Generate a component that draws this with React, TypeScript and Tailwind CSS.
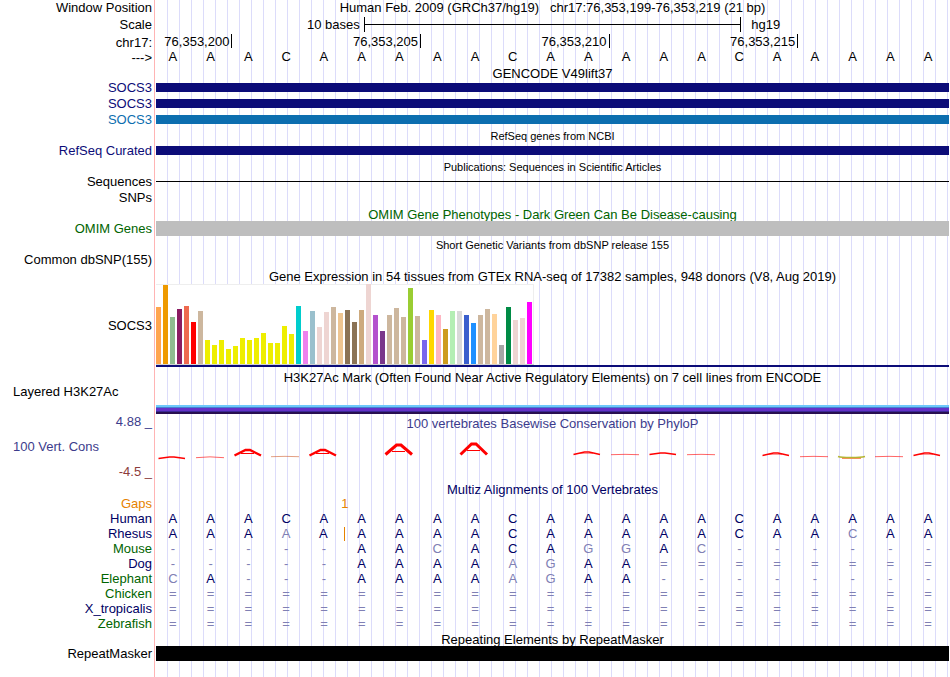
import type { ReactNode } from "react";
import { clsx } from "clsx";

interface IRow {
  label?: ReactNode;
  labelClass?: string;
  className: string;
  children?: ReactNode;
}

interface ITissue {
  height: number;
  color: string;
}

interface IPeak {
  top: number;
  height: number;
  color?: string;
  faint?: boolean;
  dip?: boolean;
}

const NAVY = "text-[#0c0c78]";
const GREEN = "text-[#006400]";

const REFERENCE = "AAACAAAAACAAAAACAAAAA";

const COORDINATES = ["76,353,200", "76,353,205", "76,353,210", "76,353,215"];

const GENES = [
  { text: "text-[#0c0c78]", bar: "bg-[#0c0c78]" },
  { text: "text-[#0c0c78]", bar: "bg-[#0c0c78]" },
  { text: "text-[#0c6eaf]", bar: "bg-[#0c6eaf]" },
];

const SPECIES = [
  { name: "Human", color: "text-[#000064]", bases: "AAACAAAAACAAAAACAAAAA" },
  { name: "Rhesus", color: "text-[#000064]", bases: "AAAAAAAAACAAAAACAACAA", gapAfter: 4 },
  { name: "Mouse", color: GREEN, bases: "-----AACACAGGAC------" },
  { name: "Dog", color: "text-[#000064]", bases: "-----AAAAAGAA========" },
  { name: "Elephant", color: GREEN, bases: "CA---AAAAAGAA--------" },
  { name: "Chicken", color: GREEN, bases: "=====================" },
  { name: "X_tropicalis", color: "text-[#000064]", bases: "=====================" },
  { name: "Zebrafish", color: GREEN, bases: "=====================" },
];

const TISSUES: ITissue[] = [
  { height: 57, color: "#ffa54f" },
  { height: 79, color: "#ee9a00" },
  { height: 47, color: "#8fbc8f" },
  { height: 55, color: "#8b1c62" },
  { height: 58, color: "#ee6a50" },
  { height: 42, color: "#ff0000" },
  { height: 53, color: "#cdb79e" },
  { height: 24, color: "#eeee00" },
  { height: 19, color: "#eeee00" },
  { height: 24, color: "#eeee00" },
  { height: 15, color: "#eeee00" },
  { height: 18, color: "#eeee00" },
  { height: 26, color: "#eeee00" },
  { height: 24, color: "#eeee00" },
  { height: 26, color: "#eeee00" },
  { height: 31, color: "#eeee00" },
  { height: 21, color: "#eeee00" },
  { height: 21, color: "#eeee00" },
  { height: 38, color: "#eeee00" },
  { height: 30, color: "#eeee00" },
  { height: 58, color: "#00cdcd" },
  { height: 33, color: "#ee82ee" },
  { height: 53, color: "#9ac0cd" },
  { height: 37, color: "#eed5d2" },
  { height: 52, color: "#eed5d2" },
  { height: 57, color: "#cdb79e" },
  { height: 51, color: "#eec591" },
  { height: 54, color: "#8b7355" },
  { height: 42, color: "#8b7355" },
  { height: 54, color: "#cdaa7d" },
  { height: 80, color: "#eed5d2" },
  { height: 49, color: "#b452cd" },
  { height: 33, color: "#7a378b" },
  { height: 49, color: "#cdb79e" },
  { height: 56, color: "#cdb79e" },
  { height: 47, color: "#cdb79e" },
  { height: 76, color: "#9acd32" },
  { height: 48, color: "#cdb79e" },
  { height: 24, color: "#7a67ee" },
  { height: 54, color: "#ffd700" },
  { height: 49, color: "#ffb6c1" },
  { height: 35, color: "#cd9b1d" },
  { height: 53, color: "#b4eeb4" },
  { height: 53, color: "#d9d9d9" },
  { height: 49, color: "#3a5fcd" },
  { height: 41, color: "#1e90ff" },
  { height: 49, color: "#cdb79e" },
  { height: 55, color: "#cdb79e" },
  { height: 50, color: "#ffd39b" },
  { height: 19, color: "#a6a6a6" },
  { height: 57, color: "#008b45" },
  { height: 44, color: "#eed5d2" },
  { height: 46, color: "#eed5d2" },
  { height: 62, color: "#ff00ff" },
];

// one entry per base, null where the score is about zero
const PEAKS: (IPeak | null)[] = [
  { top: 16, height: 3 },
  { top: 16, height: 2, faint: true },
  { top: 9, height: 7 },
  { top: 16, height: 1, faint: true, color: "#d06030" },
  { top: 9, height: 7 },
  null,
  { top: 4, height: 11 },
  null,
  { top: 3, height: 12 },
  null,
  null,
  { top: 11, height: 4 },
  { top: 14, height: 1, faint: true },
  { top: 12, height: 3 },
  { top: 14, height: 1, faint: true },
  null,
  { top: 12, height: 4 },
  { top: 16, height: 1, faint: true },
  { top: 16, height: 2, dip: true, color: "#b4b432" },
  { top: 16, height: 1, faint: true },
  { top: 12, height: 4 },
];

const Row = ({ label, labelClass, className, children }: IRow) => (
  <div className={clsx("flex", className)}>
    <div className={clsx("w-[154px] shrink-0 pr-0.5 text-right", labelClass)}>
      {label}
    </div>
    <div className="min-w-0 flex-1 border-l border-[#ffb4b4] bg-[repeating-linear-gradient(to_right,transparent_0_11px,#dcdcfa_11px_12px)] bg-origin-content bg-no-repeat pl-px">
      {children}
    </div>
  </div>
);

const Title = ({ className, children }: { className: string; children: ReactNode }) => (
  <Row className={clsx("text-center", className)}>
    <h2>{children}</h2>
  </Row>
);

const Bases = ({ bases, gapAfter }: { bases: string; gapAfter?: number }) => (
  <div className="grid grid-cols-21 text-center">
    {bases.split("").map((base, i) => (
      <span
        key={i}
        className={clsx(
          "h-3.5 pr-1",
          base === REFERENCE[i] ? "text-[#000064]" : "text-[#8080b4]",
          gapAfter === i && "border-r border-[#e68200]"
        )}
      >
        {base}
      </span>
    ))}
  </div>
);

const Peak = ({ peak }: { peak: IPeak }) => {
  const bottom = peak.top + peak.height;
  const width = peak.height > 9 ? 3 : peak.height > 5 ? 2.4 : 1.5;

  if (peak.dip) {
    return (
      <g fill="none">
        <path d="M6 18.5H25" stroke="#ff8c64" />
        <path d="M2 16.5Q5 17.5 15 17.5T29 16.5" stroke={peak.color} strokeWidth="1.5" />
      </g>
    );
  }
  if (peak.faint) {
    return (
      <path
        d={`M2 ${bottom - 0.3}Q16 ${bottom - peak.height} 30 ${bottom - 0.3}`}
        fill="none"
        stroke={peak.color ?? "#ff0000"}
        strokeOpacity="0.6"
      />
    );
  }
  return (
    <g fill="none" stroke="#ff0000">
      <polyline
        points={`2.5,${bottom - 0.5} 13.5,${peak.top + 1} 18,${peak.top + 1} 29,${bottom - 0.5}`}
        strokeWidth={width}
      />
      {peak.height > 3 && (
        <path
          d={`M9 ${peak.top + Math.round(peak.height * 0.6) + 0.5}H22`}
          strokeOpacity={peak.height > 5 ? 1 : 0.4}
        />
      )}
    </g>
  );
};

const App = () => {
  return (
    <main className="flex min-h-screen flex-col bg-white pr-px font-['Liberation_Sans',Arial,sans-serif] text-[13px] leading-4 text-black">
      <Row label="Window Position" className="h-4">
        <h1 className="text-center leading-[15px] whitespace-pre">
          {"Human Feb. 2009 (GRCh37/hg19)   chr17:76,353,199-76,353,219 (21 bp)"}
        </h1>
      </Row>
      <Row label="Scale" labelClass="pt-px" className="h-[18px]">
        <div className="grid grid-cols-[5.5fr_10fr_5.5fr] pt-px">
          <span className="pr-1 text-right leading-[15px]">10 bases</span>
          <div className="h-[15px] border-x border-black">
            <div className="h-2 border-b border-black" />
          </div>
          <span className="pl-2.5 leading-[15px]">hg19</span>
        </div>
      </Row>
      <Row label="chr17:" labelClass="pt-px" className="h-4">
        <div className="grid grid-cols-21 pl-px">
          {COORDINATES.map((coordinate, i) => (
            <span
              key={coordinate}
              className={clsx(
                "h-3.5 border-r border-black pr-0.5 text-right",
                i === 0 ? "col-span-2" : "col-span-5"
              )}
            >
              {coordinate}
            </span>
          ))}
        </div>
      </Row>
      <Row label="--->" className="h-4">
        <div className="grid grid-cols-21 text-center leading-[14px]">
          {REFERENCE.split("").map((base, i) => (
            <span key={i} className="pr-1">
              {base}
            </span>
          ))}
        </div>
      </Row>

      <Title className="h-3.5">GENCODE V49lift37</Title>
      {GENES.map((gene, i) => (
        <Row key={i} label="SOCS3" labelClass={gene.text} className="h-4">
          <div className={clsx("mt-[3px] h-[9px]", gene.bar)} />
        </Row>
      ))}

      <Title className="h-[15px] text-[11px]">RefSeq genes from NCBI</Title>
      <Row label="RefSeq Curated" labelClass={NAVY} className="h-4">
        <div className="mt-[3px] h-[9px] bg-[#0c0c78]" />
      </Row>

      <Title className="h-[15px] text-[11px]">
        Publications: Sequences in Scientific Articles
      </Title>
      <Row label="Sequences" className="h-4">
        <div className="h-2 border-b border-black" />
      </Row>
      <Row label="SNPs" className="h-4" />

      <Title className={clsx("h-[15px] overflow-hidden leading-[18px]", GREEN)}>
        OMIM Gene Phenotypes - Dark Green Can Be Disease-causing
      </Title>
      <Row label="OMIM Genes" labelClass={GREEN} className="h-[15px]">
        <div className="h-full bg-[#bebebe]" />
      </Row>

      <Title className="h-4 text-[11px] leading-[18px]">
        Short Genetic Variants from dbSNP release 155
      </Title>
      <Row label="Common dbSNP(155)" className="h-4" />

      <Title className="h-4 leading-[18px]">
        Gene Expression in 54 tissues from GTEx RNA-seq of 17382 samples, 948
        donors (V8, Aug 2019)
      </Title>
      <Row label="SOCS3" labelClass="self-center" className="h-[83px]">
        <div className="flex h-full flex-col">
          <div className="flex h-[81px] w-[378px] items-end gap-0.5 border-b border-[#d2d2d2] bg-white shadow-[inset_-1px_1px_#eeeeee]">
            {TISSUES.map((tissue, i) => (
              <div
                key={i}
                className="w-[5px]"
                style={{ height: tissue.height, backgroundColor: tissue.color }}
              />
            ))}
          </div>
          <div className="h-0.5 bg-[#0c0c78]" />
        </div>
      </Row>

      <Title className="h-[17px] leading-[22px]">
        H3K27Ac Mark (Often Found Near Active Regulatory Elements) on 7 cell
        lines from ENCODE
      </Title>
      <Row
        label="Layered H3K27Ac"
        labelClass="pl-[13px] text-left!"
        className="h-[30px]"
      >
        <div className="flex h-full flex-col justify-end">
          <div className="h-0.5 bg-[#6ec8fa]" />
          <div className="h-px bg-[#4682d2]" />
          <div className="h-[3px] bg-[#6432c8]" />
          <div className="h-px bg-[#3c2896]" />
          <div className="h-0.5 bg-[#280f50]" />
        </div>
      </Row>

      <Row
        label={
          <>
            <span className="self-center">100 Vert. Cons</span>
            <span className="flex flex-col justify-between">
              <span>4.88 _</span>
              <span className="text-[#8c3c3c]">-4.5 _</span>
            </span>
          </>
        }
        labelClass="flex justify-between pb-0.5 pl-[13px] text-[#3c3c8c]"
        className="h-[68px]"
      >
        <h2 className="pt-0.5 text-center text-[#3c3c8c]">
          100 vertebrates Basewise Conservation by PhyloP
        </h2>
        <div className="grid grid-cols-21 pt-2">
          {PEAKS.map((peak, i) => (
            <svg key={i} className="h-[22px] w-[31px]" viewBox="0 0 31 22">
              {peak && <Peak peak={peak} />}
            </svg>
          ))}
        </div>
      </Row>

      <Title className="h-[15px] text-[#000064]">
        Multiz Alignments of 100 Vertebrates
      </Title>
      <Row label="Gaps" labelClass="text-[#e68200]" className="h-[15px] leading-[13px]">
        <div className="grid grid-cols-21 text-center text-[#e68200]">
          <span className="col-span-2 col-start-5">1</span>
        </div>
      </Row>
      {SPECIES.map((species) => (
        <Row
          key={species.name}
          label={species.name}
          labelClass={species.color}
          className="h-[15px] leading-[13px]"
        >
          <Bases bases={species.bases} gapAfter={species.gapAfter} />
        </Row>
      ))}

      <Title className="h-3.5 overflow-hidden">
        Repeating Elements by RepeatMasker
      </Title>
      <Row label="RepeatMasker" className="h-[15px] leading-[15px]">
        <div className="h-full bg-black" />
      </Row>
      <Row className="min-h-4 flex-1" />
    </main>
  );
};

export default App;
